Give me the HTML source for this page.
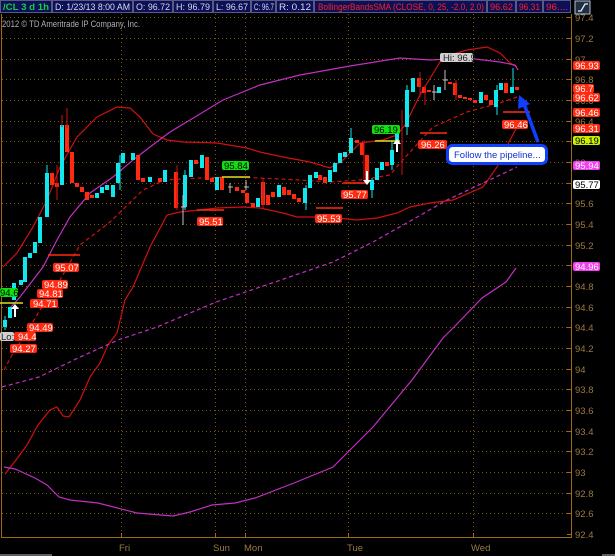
<!DOCTYPE html>
<html><head><meta charset="utf-8"><style>
html,body{margin:0;padding:0;background:#000;width:615px;height:556px;overflow:hidden}
svg{display:block}
text{font-family:"Liberation Sans",sans-serif}
</style></head><body>
<svg width="615" height="556" viewBox="0 0 615 556" xmlns="http://www.w3.org/2000/svg">
<rect width="615" height="556" fill="#000"/>
<!-- header -->
<g font-size="9">
<rect x="0" y="0" width="571" height="13" fill="#0b1058"/>
<g fill="none" stroke="#5a5a80" stroke-width="1">
<rect x="0.5" y="0.5" width="51" height="12"/><rect x="52.5" y="0.5" width="80" height="12"/>
<rect x="133.5" y="0.5" width="39" height="12"/><rect x="173.5" y="0.5" width="39" height="12"/>
<rect x="213.5" y="0.5" width="37" height="12"/><rect x="251.5" y="0.5" width="24" height="12"/>
<rect x="276.5" y="0.5" width="37" height="12"/><rect x="314.5" y="0.5" width="172" height="12"/>
<rect x="487.5" y="0.5" width="28" height="12"/><rect x="516.5" y="0.5" width="26" height="12"/>
<rect x="543.5" y="0.5" width="27" height="12"/>
</g>
<text x="3" y="10" fill="#10d040" font-weight="bold" textLength="46" lengthAdjust="spacingAndGlyphs">/CL 3 d 1h</text>
<text x="55" y="10" fill="#d8d8e8" textLength="75" lengthAdjust="spacingAndGlyphs">D: 1/23/13 8:00 AM</text>
<text x="136" y="10" fill="#d8d8e8" textLength="34" lengthAdjust="spacingAndGlyphs">O: 96.72</text>
<text x="176" y="10" fill="#d8d8e8" textLength="34" lengthAdjust="spacingAndGlyphs">H: 96.79</text>
<text x="216" y="10" fill="#d8d8e8" textLength="32" lengthAdjust="spacingAndGlyphs">L: 96.67</text>
<text x="254" y="10" fill="#d8d8e8" textLength="20" lengthAdjust="spacingAndGlyphs">C: 96.7</text>
<text x="279" y="10" fill="#d8d8e8" textLength="32" lengthAdjust="spacingAndGlyphs">R: 0.12</text>
<text x="318" y="10" fill="#ff2020" textLength="166" lengthAdjust="spacingAndGlyphs">BollingerBandsSMA (CLOSE, 0, 25, -2.0, 2.0)</text>
<text x="490" y="10" fill="#ff2020" textLength="23" lengthAdjust="spacingAndGlyphs">96.62</text>
<text x="519" y="10" fill="#ff2020" textLength="21" lengthAdjust="spacingAndGlyphs">96.31</text>
<text x="546" y="10" fill="#ff2020" textLength="22" lengthAdjust="spacingAndGlyphs">96....</text>
</g>
<rect x="575" y="1" width="15" height="13" fill="#203040" stroke="#b0c0d0"/>
<path d="M578 11 L581 11 L585 4 L588 4" stroke="#e0f0ff" stroke-width="1.3" fill="none"/>
<text x="2" y="27" fill="#b0b0b0" font-size="9" textLength="138" lengthAdjust="spacingAndGlyphs">2012 © TD Ameritrade IP Company, Inc.</text>

<!-- grid -->
<g stroke="#7a5510" stroke-width="1" stroke-dasharray="1,3">
<line x1="2" y1="17.5" x2="570" y2="17.5"/><line x1="2" y1="38.5" x2="570" y2="38.5"/>
<line x1="2" y1="59.5" x2="570" y2="59.5"/><line x1="2" y1="79.5" x2="570" y2="79.5"/>
<line x1="2" y1="100.5" x2="570" y2="100.5"/><line x1="2" y1="121.5" x2="570" y2="121.5"/>
<line x1="2" y1="141.5" x2="570" y2="141.5"/><line x1="2" y1="162.5" x2="570" y2="162.5"/>
<line x1="2" y1="183.5" x2="570" y2="183.5"/><line x1="2" y1="203.5" x2="570" y2="203.5"/>
<line x1="2" y1="224.5" x2="570" y2="224.5"/><line x1="2" y1="245.5" x2="570" y2="245.5"/>
<line x1="2" y1="265.5" x2="570" y2="265.5"/><line x1="2" y1="286.5" x2="570" y2="286.5"/>
<line x1="2" y1="307.5" x2="570" y2="307.5"/><line x1="2" y1="327.5" x2="570" y2="327.5"/>
<line x1="2" y1="348.5" x2="570" y2="348.5"/><line x1="2" y1="369.5" x2="570" y2="369.5"/>
<line x1="2" y1="389.5" x2="570" y2="389.5"/><line x1="2" y1="410.5" x2="570" y2="410.5"/>
<line x1="2" y1="431.5" x2="570" y2="431.5"/><line x1="2" y1="451.5" x2="570" y2="451.5"/>
<line x1="2" y1="472.5" x2="570" y2="472.5"/><line x1="2" y1="493.5" x2="570" y2="493.5"/>
<line x1="2" y1="513.5" x2="570" y2="513.5"/>
<line x1="121.5" y1="14" x2="121.5" y2="537"/><line x1="215.5" y1="14" x2="215.5" y2="537"/>
<line x1="245.5" y1="14" x2="245.5" y2="537"/><line x1="348.5" y1="14" x2="348.5" y2="537"/>
<line x1="473.5" y1="14" x2="473.5" y2="537"/>
</g>
<!-- axes -->
<g stroke="#a06a18" stroke-width="1" fill="none">
<line x1="1.5" y1="14" x2="1.5" y2="537"/>
<line x1="571.5" y1="14" x2="571.5" y2="537"/>
<line x1="1" y1="537.5" x2="572" y2="537.5"/>
<path d="M567 17.5h5M567 38.5h5M567 59.5h5M567 79.5h5M567 100.5h5M567 121.5h5M567 141.5h5M567 162.5h5M567 183.5h5M567 203.5h5M567 224.5h5M567 245.5h5M567 265.5h5M567 286.5h5M567 307.5h5M567 327.5h5M567 348.5h5M567 369.5h5M567 389.5h5M567 410.5h5M567 431.5h5M567 451.5h5M567 472.5h5M567 493.5h5M567 513.5h5M567 534.5h5"/>
<path d="M121.5 533v4M215.5 533v4M245.5 533v4M348.5 533v4M473.5 533v4"/>
</g>
<g fill="#9a7a40" font-size="9.5">
<text x="575" y="21">97.4</text><text x="575" y="42">97.2</text><text x="575" y="63">97</text>
<text x="575" y="83">96.8</text><text x="575" y="104">96.6</text><text x="575" y="125">96.4</text>
<text x="575" y="166">96</text><text x="575" y="187">95.8</text><text x="575" y="207">95.6</text>
<text x="575" y="228">95.4</text><text x="575" y="249">95.2</text><text x="575" y="269">95</text>
<text x="575" y="290">94.8</text><text x="575" y="311">94.6</text><text x="575" y="331">94.4</text>
<text x="575" y="352">94.2</text><text x="575" y="373">94</text><text x="575" y="393">93.8</text>
<text x="575" y="414">93.6</text><text x="575" y="435">93.4</text><text x="575" y="455">93.2</text>
<text x="575" y="476">93</text><text x="575" y="497">92.8</text><text x="575" y="517">92.6</text>
<text x="575" y="538">92.4</text>
<text x="119" y="551">Fri</text><text x="213" y="551">Sun</text><text x="244" y="551">Mon</text>
<text x="347" y="551">Tue</text><text x="471" y="551">Wed</text>
</g>
<rect x="0" y="554" width="52" height="2" fill="#5a6068"/>
<rect x="602" y="554" width="13" height="2" fill="#5a6068"/>

<!-- curves -->
<g fill="none" stroke-width="1.2">
<polyline stroke="#d01010" points="5,474 16,460 27,445 38,425 50,410 57,407 63,416 69,417 80,400 90,377 100,363 108,345 117,333 125,300 133,287 150,247 167,215 180,212 200,210 217,208 243,207 260,208 283,213 297,217 317,217 337,218 357,220 377,218 397,213 410,207 430,203 453,200 483,187 497,167 510,140 517,127"/>
<polyline stroke="#d01010" points="3,267 17,253 33,227 47,200 60,167 77,137 97,117 117,107 130,108 140,117 153,134 167,140 183,142 217,143 247,148 260,152 283,157 310,162 330,168 343,160 360,143 383,140 397,135 405,125 420,95 443,57 467,50 487,47 500,53 510,63 517,67"/>
<polyline stroke="#d01010" stroke-dasharray="4,3" points="4,370 12,355 22,340 40,310 60,280 80,245 110,222 143,190 165,180 200,178 230,177 260,178 300,180 330,182 360,180 390,175 400,163 433,127 467,112 500,103 517,97"/>
<polyline stroke="#c030c0" points="10,308 20,297 43,267 57,240 70,217 90,193 113,177 133,160 150,147 170,132 190,120 223,100 260,85 300,75 350,66 400,58 430,60 467,58 500,62 515,65 518,70"/>
<polyline stroke="#c030c0" stroke-dasharray="4,3" points="2,387 39,377 78,358 118,340 157,327 216,302 275,282 333,262 373,242 412,220 447,200 517,167"/>
<polyline stroke="#c030c0" points="4,467 15,469 35,478 47,485 59,497 70,500 98,503 137,513 173,516 190,512 212,505 235,503 255,498 294,483 333,467 373,427 412,380 443,338 456,325 482,298 506,282 516,268"/>
</g>

<!-- candles: cyan -->
<g fill="#10e8f0">
<rect x="3" y="320" width="4" height="7"/><rect x="8" y="307" width="4" height="11"/>
<rect x="12" y="283" width="4" height="17"/><rect x="19" y="280" width="4" height="5"/>
<rect x="23" y="257" width="4" height="25"/><rect x="28" y="253" width="4" height="5"/>
<rect x="33" y="242" width="4" height="11"/><rect x="38" y="217" width="4" height="26"/>
<rect x="45" y="173" width="4" height="44"/><rect x="60" y="125" width="4" height="60"/>
<rect x="95" y="193" width="4" height="5"/><rect x="100" y="187" width="4" height="6"/>
<rect x="105" y="185" width="4" height="5"/><rect x="111" y="185" width="4" height="12"/>
<rect x="116" y="163" width="4" height="20"/><rect x="121" y="153" width="4" height="10"/>
<rect x="131" y="153" width="4" height="7"/><rect x="148" y="177" width="4" height="5"/>
<rect x="163" y="170" width="4" height="12"/><rect x="183" y="175" width="4" height="32"/>
<rect x="189" y="160" width="4" height="17"/><rect x="200" y="155" width="4" height="13"/>
<rect x="215" y="177" width="4" height="13"/><rect x="256" y="198" width="4" height="9"/>
<rect x="277" y="185" width="4" height="12"/><rect x="303" y="188" width="4" height="15"/>
<rect x="308" y="175" width="4" height="13"/><rect x="314" y="172" width="4" height="6"/>
<rect x="328" y="170" width="4" height="12"/><rect x="333" y="163" width="4" height="9"/>
<rect x="338" y="153" width="4" height="10"/><rect x="343" y="152" width="4" height="5"/>
<rect x="349" y="138" width="4" height="15"/><rect x="370" y="180" width="4" height="10"/>
<rect x="375" y="168" width="4" height="12"/><rect x="380" y="162" width="4" height="8"/>
<rect x="390" y="150" width="4" height="15"/><rect x="395" y="132" width="4" height="10"/>
<rect x="405" y="90" width="4" height="37"/><rect x="411" y="78" width="4" height="14"/>
<rect x="437" y="87" width="4" height="6"/><rect x="479" y="92" width="4" height="11"/>
<rect x="494" y="90" width="4" height="17"/><rect x="499" y="83" width="4" height="7"/>
<rect x="510" y="87" width="4" height="6"/>
</g>
<!-- candles: red -->
<g fill="#ff2a10">
<rect x="50" y="173" width="4" height="12"/><rect x="55" y="183" width="4" height="4"/>
<rect x="65" y="125" width="4" height="27"/><rect x="70" y="152" width="4" height="31"/>
<rect x="75" y="183" width="4" height="4"/><rect x="80" y="187" width="4" height="5"/>
<rect x="85" y="192" width="4" height="8"/><rect x="90" y="195" width="4" height="3"/>
<rect x="136" y="155" width="4" height="25"/><rect x="141" y="178" width="4" height="4"/>
<rect x="158" y="178" width="4" height="4"/><rect x="174" y="172" width="4" height="36"/>
<rect x="194" y="160" width="4" height="4"/><rect x="205" y="157" width="4" height="23"/>
<rect x="210" y="178" width="4" height="4"/><rect x="220" y="177" width="4" height="13"/>
<rect x="235" y="187" width="4" height="4"/><rect x="241" y="190" width="4" height="3"/>
<rect x="245" y="193" width="4" height="10"/><rect x="251" y="203" width="4" height="4"/>
<rect x="261" y="182" width="4" height="23"/><rect x="266" y="195" width="4" height="10"/>
<rect x="271" y="192" width="4" height="5"/><rect x="282" y="187" width="4" height="8"/>
<rect x="287" y="190" width="4" height="5"/><rect x="292" y="194" width="4" height="5"/>
<rect x="297" y="198" width="4" height="4"/><rect x="318" y="175" width="4" height="5"/>
<rect x="323" y="177" width="4" height="6"/><rect x="355" y="140" width="4" height="3"/>
<rect x="360" y="143" width="4" height="12"/><rect x="365" y="155" width="4" height="25"/>
<rect x="385" y="162" width="4" height="4"/><rect x="417" y="78" width="4" height="9"/>
<rect x="422" y="87" width="4" height="6"/><rect x="427" y="90" width="4" height="2"/>
<rect x="448" y="82" width="4" height="2"/><rect x="453" y="83" width="4" height="12"/>
<rect x="458" y="95" width="4" height="3"/><rect x="463" y="97" width="4" height="2"/>
<rect x="468" y="98" width="4" height="2"/><rect x="473" y="100" width="4" height="3"/>
<rect x="484" y="95" width="4" height="5"/><rect x="489" y="100" width="4" height="5"/>
<rect x="504" y="83" width="4" height="10"/><rect x="515" y="87" width="4" height="3"/>
</g>
<!-- wicks -->
<g stroke="#d01010" stroke-width="1">
<path d="M57 165v35M67 108v20M62 115v12M177 165v45M263 178v30M364 140v40M402 110v65M420 72v25M425 85v20M456 80v20"/>
</g>
<g stroke="#10e8f0" stroke-width="1">
<path d="M5 316v14M47 165v10M120 155v35M185 170v40M306 185v25M351 128v12M372 178v20M392 140v30M407 85v50M513 68v20M497 85v30"/>
</g>
<g stroke="#c0c0c0" stroke-width="1"><path d="M183 195v30M230 183v10M246 180v10M434 85v15M445 70v20"/><path d="M181 207h5M228 187h5M244 187h5M432 92h5M443 80h5"/></g>

<!-- level lines -->
<g stroke-width="1.5">
<line x1="48" y1="255" x2="80" y2="255" stroke="#ff2a10"/>
<line x1="0" y1="303" x2="23" y2="303" stroke="#d8e020"/>
<line x1="222" y1="177" x2="250" y2="177" stroke="#d8e020"/>
<line x1="375" y1="141" x2="400" y2="141" stroke="#d8e020"/>
<line x1="197" y1="210" x2="224" y2="210" stroke="#ff2a10"/>
<line x1="316" y1="208" x2="343" y2="208" stroke="#ff2a10"/>
<line x1="343" y1="183" x2="368" y2="183" stroke="#ff2a10"/>
<line x1="420" y1="133" x2="447" y2="133" stroke="#ff2a10"/>
<line x1="503" y1="112" x2="530" y2="112" stroke="#ff2a10"/>
</g>
<!-- white arrows -->
<g fill="#fff">
<path d="M15 304l-4 5h3v8h2v-8h3z"/>
<path d="M367 185l-4-5h3v-9h2v9h3z"/>
<path d="M397 139l-4 5h3v8h2v-8h3z"/>
</g>

<!-- in-chart badges -->
<g font-size="9.5">
<rect x="53" y="263" width="26" height="9" rx="2" fill="#ff2a10"/><text x="55" y="271" fill="#fff">95.07</text>
<rect x="42" y="280" width="26" height="9" rx="2" fill="#ff2a10"/><text x="44" y="288" fill="#fff">94.89</text>
<rect x="37" y="289" width="26" height="9" rx="2" fill="#ff2a10"/><text x="39" y="297" fill="#fff">94.81</text>
<rect x="30" y="299" width="28" height="9" rx="2" fill="#ff2a10"/><text x="33" y="307" fill="#fff">94.71</text>
<rect x="27" y="323" width="26" height="9" rx="2" fill="#ff2a10"/><text x="29" y="331" fill="#fff">94.49</text>
<rect x="0" y="332" width="14" height="9" rx="2" fill="#d0d0d0"/><text x="1" y="340" fill="#222">Lo:</text>
<rect x="14" y="332" width="22" height="9" rx="2" fill="#ff2a10"/><text x="18" y="340" fill="#fff">94.4</text>
<rect x="10" y="344" width="27" height="9" rx="2" fill="#ff2a10"/><text x="12" y="352" fill="#fff">94.27</text>
<rect x="0" y="288" width="18" height="9" rx="2" fill="#10e010"/><text x="0" y="296" fill="#000">94.6</text>
<rect x="222" y="161" width="27" height="9" rx="2" fill="#10e010"/><text x="224" y="169" fill="#000">95.84</text>
<rect x="372" y="125" width="28" height="9" rx="2" fill="#10e010"/><text x="374" y="133" fill="#000">96.19</text>
<rect x="197" y="217" width="26" height="9" rx="2" fill="#ff2a10"/><text x="199" y="225" fill="#fff">95.51</text>
<rect x="315" y="214" width="27" height="9" rx="2" fill="#ff2a10"/><text x="317" y="222" fill="#fff">95.53</text>
<rect x="341" y="190" width="27" height="9" rx="2" fill="#ff2a10"/><text x="343" y="198" fill="#fff">95.77</text>
<rect x="418" y="140" width="29" height="9" rx="2" fill="#ff2a10"/><text x="421" y="148" fill="#fff">96.26</text>
<rect x="502" y="120" width="26" height="9" rx="2" fill="#ff2a10"/><text x="504" y="128" fill="#fff">96.46</text>
<rect x="440" y="53" width="33" height="9" rx="2" fill="#d0d0d0"/><text x="443" y="61" fill="#222">Hi: 96.9</text>
<!-- right badges -->
<rect x="573" y="61" width="27" height="9" rx="2" fill="#ff2a10"/><text x="575" y="69" fill="#fff">96.93</text>
<rect x="573" y="84" width="21" height="9" rx="2" fill="#ff2a10"/><text x="575" y="92" fill="#fff">96.7</text>
<rect x="573" y="93" width="27" height="9" rx="2" fill="#ff2a10"/><text x="575" y="101" fill="#fff">96.62</text>
<rect x="573" y="108" width="27" height="9" rx="2" fill="#ff2a10"/><text x="575" y="116" fill="#fff">96.46</text>
<rect x="573" y="124" width="27" height="9" rx="2" fill="#ff2a10"/><text x="575" y="132" fill="#fff">96.31</text>
<rect x="573" y="136" width="27" height="9" rx="2" fill="#c8f000"/><text x="575" y="144" fill="#000">96.19</text>
<rect x="573" y="161" width="27" height="9" rx="2" fill="#f040f0"/><text x="575" y="169" fill="#fff">95.94</text>
<rect x="573" y="180" width="27" height="9" rx="2" fill="#fff"/><text x="575" y="188" fill="#000">95.77</text>
<rect x="573" y="262" width="27" height="9" rx="2" fill="#f040f0"/><text x="575" y="270" fill="#fff">94.96</text>
</g>

<!-- callout -->
<path d="M538 142 L524 104" stroke="#1040ff" stroke-width="3.5" fill="none"/>
<path d="M519 95 L518 109 L530 104 Z" fill="#1040ff"/>
<rect x="447.5" y="145.5" width="99" height="18" rx="5" fill="#fff" stroke="#1040ff" stroke-width="3"/>
<text x="454" y="158" fill="#1030d0" font-size="9.5">Follow the pipeline...</text>
</svg>
</body></html>
